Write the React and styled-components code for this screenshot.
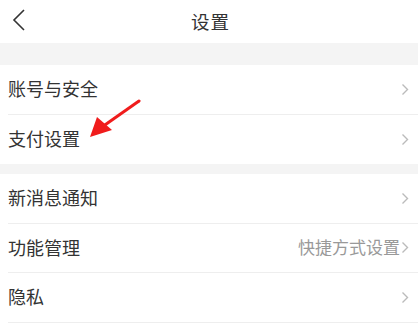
import React from 'react';
import styled, { createGlobalStyle } from 'styled-components';

const GlobalStyle = createGlobalStyle`
  html, body {
    margin: 0;
    padding: 0;
    background: #fff;
    font-family: "Noto Sans CJK SC", "Noto Sans", sans-serif;
  }
`;

const groups = [
  [
    { label: '账号与安全' },
    { label: '支付设置', pointed: true }
  ],
  [
    { label: '新消息通知' },
    { label: '功能管理', extra: '快捷方式设置' },
    { label: '隐私' }
  ]
];

const Chevron = ({ color = '#bbb' }) => (
  <svg width='8' height='13' viewBox='0 0 8 13'>
    <path d='M1.5 1.5 L6.5 6.5 L1.5 11.5' fill='none' stroke={color} strokeWidth='1.4' />
  </svg>
);

const BackIcon = () => (
  <svg width='14' height='22' viewBox='0 0 14 22'>
    <path d='M12 1 L2 11 L12 21' fill='none' stroke='#333' strokeWidth='1.6' />
  </svg>
);

const RedArrow = () => (
  <svg width='56' height='42' viewBox='0 0 56 42'>
    <path d='M53 3 L16 29' stroke='#f01c1c' strokeWidth='3' strokeLinecap='round' />
    <polygon points='4,39 11,19 26,32' fill='#f01c1c' />
  </svg>
);

const App = () => {
  return (
    <>
      <GlobalStyle />
      <Page>
        <Header>
          <BackButton>
            <BackIcon />
          </BackButton>
          <Title>设置</Title>
        </Header>
        {groups.map((rows, gi) => (
          <Group key={gi} first={gi === 0}>
            {rows.map((row, ri) => (
              <Row key={row.label} last={gi === 0 && ri === rows.length - 1}>
                <Label>{row.label}</Label>
                {row.pointed && (
                  <Pointer>
                    <RedArrow />
                  </Pointer>
                )}
                <Right>
                  {row.extra && <Extra>{row.extra}</Extra>}
                  <Chevron />
                </Right>
              </Row>
            ))}
          </Group>
        ))}
      </Page>
    </>
  );
};

export default App;

const Page = styled.div`
  width: 418px;
  height: 329px;
  background: #f4f4f4;
  overflow: hidden;
  display: flex;
  flex-direction: column;
`;

const Header = styled.div`
  flex: none;
  height: 43px;
  background: #fff;
  display: flex;
  align-items: center;
  justify-content: center;
  position: relative;
`;

const BackButton = styled.div`
  position: absolute;
  left: 12px;
  top: 9px;
  display: flex;
`;

const Title = styled.div`
  font-size: 18.5px;
  color: #333;
  letter-spacing: 1px;
  margin-top: -2px;
  margin-left: 3px;
`;

const Group = styled.div`
  flex: ${p => (p.first ? 'none' : '1')};
  background: #fff;
  margin-top: ${p => (p.first ? '22px' : '10px')};
  padding-left: 8px;
`;

const Row = styled.div`
  height: 49.5px;
  box-sizing: border-box;
  display: flex;
  align-items: center;
  position: relative;
  border-bottom: ${p => (p.last ? 'none' : '1px solid #eeeeee')};
`;

const Label = styled.div`
  font-size: 18px;
  color: #333;
  margin-top: -2px;
`;

const Right = styled.div`
  margin-left: auto;
  display: flex;
  align-items: center;
  padding-right: 9px;
`;

const Extra = styled.span`
  font-size: 17px;
  color: #999;
  margin-right: 1px;
  margin-top: -2px;
`;

const Pointer = styled.div`
  position: absolute;
  left: 78px;
  top: -17px;
  display: flex;
`;
